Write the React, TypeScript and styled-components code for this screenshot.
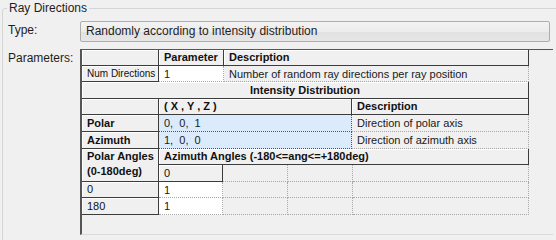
import styled, { createGlobalStyle } from "styled-components";

const GlobalStyle = createGlobalStyle`
  html, body {
    margin: 0;
    padding: 0;
    background: #f0f0f0;
    overflow: hidden;
  }
  body {
    font-family: "Liberation Sans", Arial, sans-serif;
    font-size: 12px;
    color: #1e1e1e;
  }
`;

const Page = styled.div`
  width: 556px;
  height: 240px;
  overflow: hidden;
  padding: 1px 0 0 2px;
  box-sizing: border-box;
`;

const Group = styled.fieldset`
  margin: 0;
  padding: 6px 0 0 4px;
  border: 1px solid #d5d5d5;
  border-radius: 3px;
  width: 600px;
  height: 300px;
  box-sizing: border-box;
  min-width: 0;
`;

const Legend = styled.legend`
  padding: 0 2px;
  margin-left: 0;
  font-size: 12px;
  line-height: 14px;
  color: #1e1e1e;
`;

const FormRow = styled.div`
  display: flex;
  align-items: flex-start;
  margin-bottom: 7px;
`;

const Label = styled.div<{ $w: number }>`
  width: ${(p) => p.$w}px;
  padding-left: 1px;
  box-sizing: border-box;
  flex-shrink: 0;
  line-height: 19px;
`;

const Combo = styled.div`
  width: 470px;
  height: 21px;
  margin-left: 8px;
  box-sizing: border-box;
  border: 1px solid #adadad;
  border-radius: 2px;
  background: linear-gradient(#f3f3f3 0%, #ececec 50%, #e1e1e1 51%, #e6e6e6 100%);
  padding-left: 5px;
  line-height: 19px;
  white-space: nowrap;
`;

const Grid = styled.div`
  width: 473px;
  height: 186px;
  margin-left: 8px;
  box-sizing: border-box;
  border-top: 1px solid #555;
  border-left: 2px solid #555;
  border-bottom: 1px solid #dadada;
  background: #f0f0f0;
  font-size: 11px;
`;

const Row = styled.div<{ $h: number }>`
  display: flex;
  height: ${(p) => p.$h}px;
`;

const Stack = styled.div`
  display: flex;
  flex-direction: column;
`;

const Block = styled.div`
  display: flex;
`;

const HeadCell = styled.div<{ $w: number; $h?: number; $bold?: boolean; $center?: boolean; $small?: boolean; $top?: boolean }>`
  width: ${(p) => p.$w}px;
  height: ${(p) => (p.$h ? `${p.$h}px` : "100%")};
  box-sizing: border-box;
  flex-shrink: 0;
  display: flex;
  align-items: ${(p) => (p.$top ? "flex-start" : "center")};
  justify-content: ${(p) => (p.$center ? "center" : "flex-start")};
  padding-left: ${(p) => (p.$center ? 0 : 5)}px;
  background: #f0f0f0;
  border-right: 1px solid #3c3c3c;
  border-bottom: 1px solid #3c3c3c;
  box-shadow: inset 1px 1px 0 #ffffff;
  font-weight: ${(p) => (p.$bold ? 700 : 400)};
  font-size: ${(p) => (p.$small ? 10 : 11)}px;
  line-height: 15px;
  color: #111;
  white-space: nowrap;
`;

const tones = {
  white: "#ffffff",
  blue: "#dcebfc",
  gray: "#f0f0f0",
};

const Cell = styled.div<{ $w: number; $tone: keyof typeof tones; $dark?: boolean }>`
  width: ${(p) => p.$w}px;
  height: 100%;
  box-sizing: border-box;
  flex-shrink: 0;
  display: flex;
  align-items: center;
  padding-left: 5px;
  background: ${(p) => tones[p.$tone]};
  border-right: 1px dotted ${(p) => (p.$dark ? "#555" : "#a8a8a8")};
  border-bottom: 1px dotted ${(p) => (p.$dark ? "#555" : "#a8a8a8")};
  color: #1a1a1a;
  white-space: nowrap;
`;

export default function App() {
  return (
    <Page>
      <GlobalStyle />
      <Group>
        <Legend>Ray Directions</Legend>
        <FormRow>
          <Label $w={65}>Type:</Label>
          <Combo>Randomly according to intensity distribution</Combo>
        </FormRow>
        <FormRow>
          <Label $w={65}>Parameters:</Label>
          <Grid>
            <Row $h={16}>
              <HeadCell $w={77} />
              <HeadCell $w={65} $bold>Parameter</HeadCell>
              <HeadCell $w={305} $bold>Description</HeadCell>
            </Row>
            <Row $h={16}>
              <HeadCell $w={77} $small>Num Directions</HeadCell>
              <Cell $w={65} $tone="white">1</Cell>
              <Cell $w={305} $tone="gray">Number of random ray directions per ray position</Cell>
            </Row>
            <Row $h={17}>
              <HeadCell $w={447} $bold $center>Intensity Distribution</HeadCell>
            </Row>
            <Row $h={16}>
              <HeadCell $w={77} />
              <HeadCell $w={193} $bold>( X , Y , Z )</HeadCell>
              <HeadCell $w={177} $bold>Description</HeadCell>
            </Row>
            <Row $h={17}>
              <HeadCell $w={77} $bold>Polar</HeadCell>
              <Cell $w={193} $tone="blue" $dark>0,&nbsp; 0,&nbsp; 1</Cell>
              <Cell $w={177} $tone="gray">Direction of polar axis</Cell>
            </Row>
            <Row $h={17}>
              <HeadCell $w={77} $bold>Azimuth</HeadCell>
              <Cell $w={193} $tone="blue" $dark>1,&nbsp; 0,&nbsp; 0</Cell>
              <Cell $w={177} $tone="gray">Direction of azimuth axis</Cell>
            </Row>
            <Block>
              <HeadCell $w={77} $h={33} $bold $top>
                Polar Angles
                <br />
                (0-180deg)
              </HeadCell>
              <Stack>
                <Row $h={16}>
                  <HeadCell $w={370} $bold>Azimuth Angles (-180&lt;=ang&lt;=+180deg)</HeadCell>
                </Row>
                <Row $h={17}>
                  <HeadCell $w={64}>0</HeadCell>
                  <Cell $w={65} $tone="gray" />
                  <Cell $w={65} $tone="gray" />
                  <Cell $w={176} $tone="gray" />
                </Row>
              </Stack>
            </Block>
            <Row $h={16}>
              <HeadCell $w={77}>0</HeadCell>
              <Cell $w={64} $tone="white">1</Cell>
              <Cell $w={65} $tone="gray" />
              <Cell $w={65} $tone="gray" />
              <Cell $w={176} $tone="gray" />
            </Row>
            <Row $h={17}>
              <HeadCell $w={77}>180</HeadCell>
              <Cell $w={64} $tone="white">1</Cell>
              <Cell $w={65} $tone="gray" />
              <Cell $w={65} $tone="gray" />
              <Cell $w={176} $tone="gray" />
            </Row>
          </Grid>
        </FormRow>
      </Group>
    </Page>
  );
}
